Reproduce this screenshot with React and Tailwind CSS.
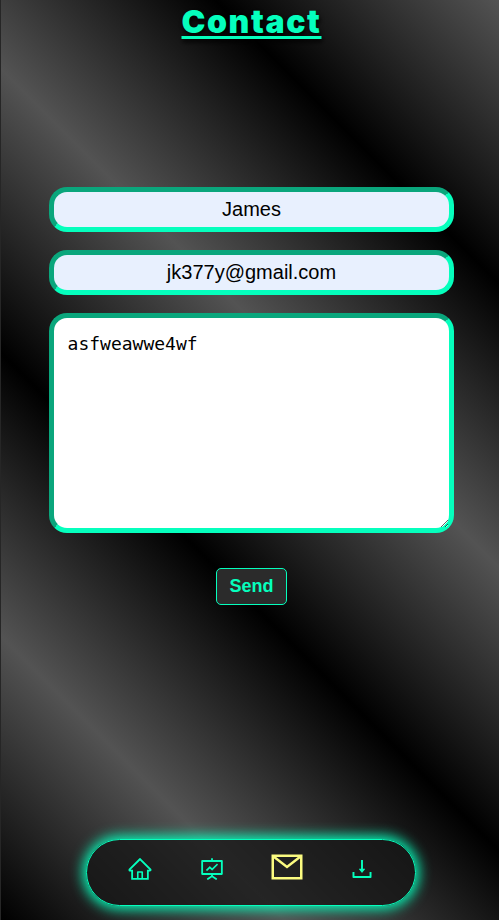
import { AiOutlineHome, AiOutlineFundProjectionScreen, AiOutlineDownload } from "react-icons/ai";

const fieldClass =
  "block w-full rounded-[18px] border-[5px] border-t-[#0aa67c] border-l-[#0aa67c] border-r-[#05ffbd] border-b-[#05ffbd] outline-none";

function MailIcon({ className }) {
  return (
    <svg viewBox="0 0 32 26" fill="none" stroke="currentColor" strokeWidth="2.5" className={className} aria-hidden="true">
      <rect x="1.75" y="1.75" width="28.5" height="22.5" />
      <path d="M2.5 2.5 16 13 29.5 2.5" />
    </svg>
  );
}

const links = [
  { label: "Home", href: "#home", Icon: AiOutlineHome },
  { label: "Projects", href: "#projects", Icon: AiOutlineFundProjectionScreen },
  { label: "Contact", href: "#contact", Icon: MailIcon, active: true },
  { label: "Download", href: "#download", Icon: AiOutlineDownload },
];

export default function App() {
  return (
    <div className="flex min-h-screen flex-col items-center border-l border-[#262626] bg-[linear-gradient(45deg,#000_0%,#535353_20%,#000_40%,#535353_60%,#000_80%,#535353_100%)] pb-[14px] pl-[3px] font-['Liberation_Sans',Arial,sans-serif]">
      <h1 className="font-[Inter,sans-serif] text-[32px] leading-[44px] font-black tracking-wider text-[#05ffbd] underline decoration-[3px] underline-offset-[3px] [text-shadow:1px_3px_4px_#000]">
        Contact
      </h1>
      <form className="mt-[143px] flex w-[82%] flex-col items-center gap-[18px]" onSubmit={(e) => e.preventDefault()}>
        <input aria-label="Name" type="text" defaultValue="James" className={`${fieldClass} h-[45px] bg-[#e8f0fe] text-center text-xl text-black`} />
        <input aria-label="Email" type="email" defaultValue="jk377y@gmail.com" className={`${fieldClass} h-[45px] bg-[#e8f0fe] text-center text-xl text-black`} />
        <textarea aria-label="Message" defaultValue="asfweawwe4wf" className={`${fieldClass} h-[220px] bg-white p-[14px] font-['DejaVu_Sans_Mono',monospace] text-[18px] leading-6 text-black`} />
        <button type="submit" className="mt-[17px] h-[37px] rounded-[5px] border border-[#05ffbd] bg-[#2b2b2b] px-3 text-[18px] font-bold text-[#05ffbd]">
          Send
        </button>
      </form>
      <nav className="mt-auto mr-0.5 flex h-[67px] w-2/3 items-center justify-between rounded-full border border-[#05ffbd] bg-[#161616]/75 px-10 pb-2 shadow-[0_0_13px_3px_#05ffbd]">
        {links.map(({ label, href, Icon, active }) => (
          <a key={label} href={href} aria-label={label} className={active ? "pb-1 text-[#fbfb80]" : "text-[#05ffbd]"}>
            <Icon className={active ? "h-[26px] w-8" : "size-[26px]"} />
          </a>
        ))}
      </nav>
    </div>
  );
}
